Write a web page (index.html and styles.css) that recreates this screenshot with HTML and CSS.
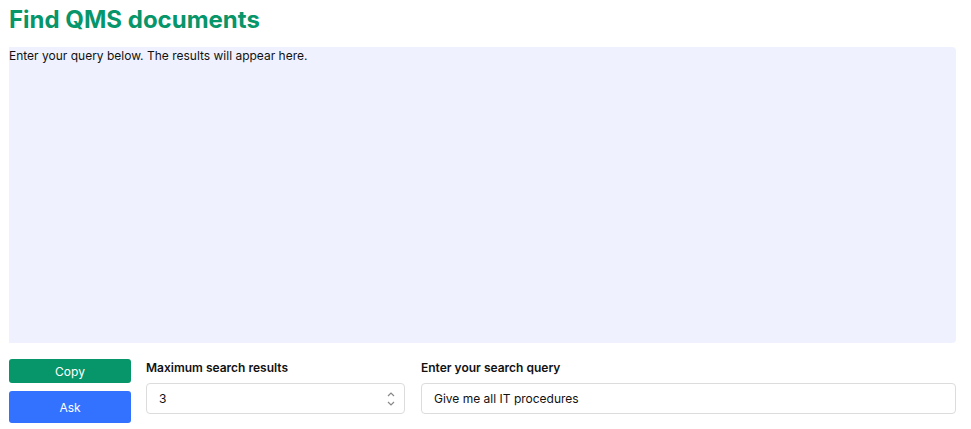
FILE: index.html
```html
<!DOCTYPE html>
<html>
<head>
<meta charset="utf-8">
<link rel="stylesheet" href="styles.css">
</head>
<body>
<div class="page">
  <h1 class="title">Find QMS documents</h1>
  <div class="results">Enter your query below. The results will appear here.</div>
  <div class="controls">
    <div class="buttons">
      <button class="btn btn-copy">Copy</button>
      <button class="btn btn-ask">Ask</button>
    </div>
    <div class="field field-num">
      <label class="label">Maximum search results</label>
      <div class="input num-input">
        <span>3</span>
        <svg class="spin" width="10" height="18" viewBox="0 0 10 18"><path d="M2 6 L5 3 L8 6" fill="none" stroke="#888" stroke-width="1.2"/><path d="M2 12 L5 15 L8 12" fill="none" stroke="#888" stroke-width="1.2"/></svg>
      </div>
    </div>
    <div class="field field-query">
      <label class="label">Enter your search query</label>
      <div class="input">Give me all IT procedures</div>
    </div>
  </div>
</div>
</body>
</html>
```

FILE: styles.css
```css
* { box-sizing: border-box; }
body {
  margin: 0;
  font-family: Inter, "Noto Sans", sans-serif;
  color: #111;
  background: #fff;
}
.page {
  padding: 5px 15px 0 9px;
}
.title {
  margin: 0;
  font-size: 24px;
  font-weight: 700;
  color: #07956a;
  line-height: 29px;
}
.results {
  margin-top: 13px;
  height: 296px;
  background: #eff2fe;
  border-radius: 0 4px 4px 0;
  font-size: 12px;
  line-height: 16px;
  padding: 1px 0 0 0;
  color: #111;
}
.controls {
  display: flex;
  margin-top: 16px;
}
.buttons {
  display: flex;
  flex-direction: column;
  gap: 8px;
  width: 122px;
  flex: none;
}
.btn {
  border: none;
  border-radius: 3px;
  color: #fff;
  font-family: Inter, "Noto Sans", sans-serif;
  font-size: 12px;
  padding: 0;
  cursor: pointer;
}
.btn-copy { height: 24px; background: #07956a; }
.btn-ask { height: 32px; background: #3371ff; }
.field {
  display: flex;
  flex-direction: column;
}
.field-num { width: 259px; flex: none; margin-left: 15px; }
.field-query { flex: 1; margin-left: 16px; }
.label {
  font-size: 12px;
  font-weight: 600;
  line-height: 16px;
  height: 24px;
  padding-top: 1px;
  color: #111;
}
.input {
  height: 31px;
  border: 1px solid #dcdcdc;
  border-radius: 4px;
  font-size: 12px;
  padding: 0 12px;
  display: flex;
  align-items: center;
  color: #111;
}
.num-input {
  justify-content: space-between;
  padding-right: 8px;
}
.spin { display: block; }
```
